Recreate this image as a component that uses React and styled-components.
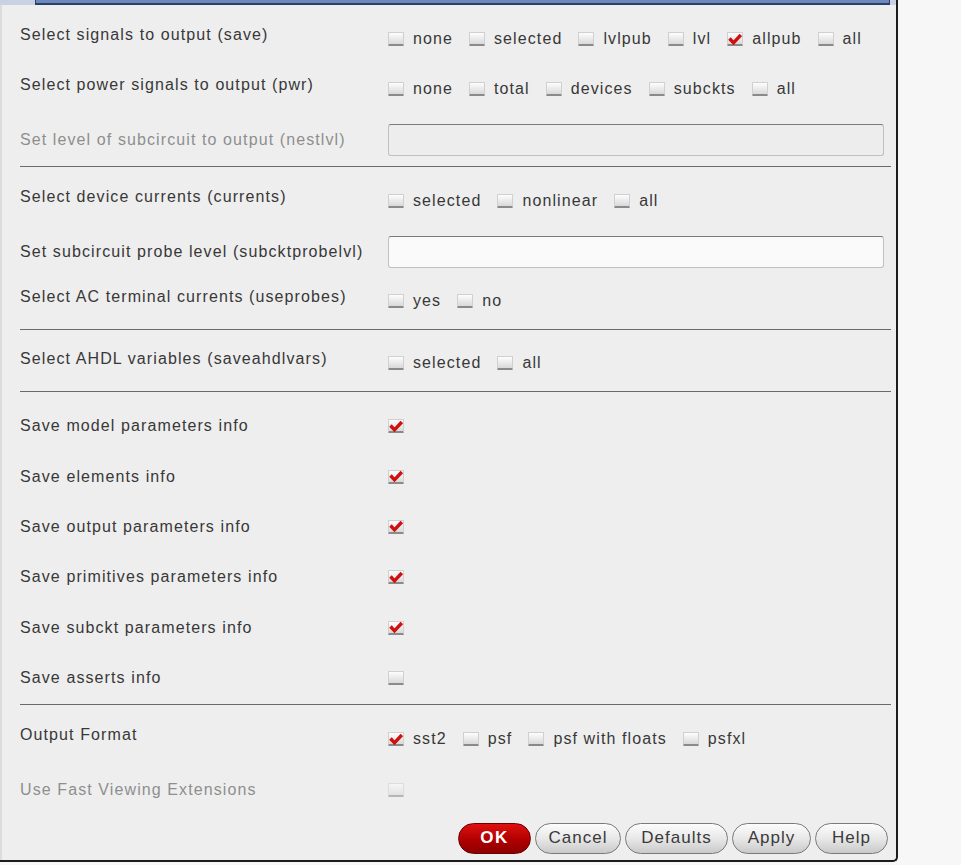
import React from 'react';
import styled, { createGlobalStyle } from 'styled-components';

const Global = createGlobalStyle`
  body {
    margin: 0;
    background: #f7f7f7;
    font-family: "Liberation Sans", Arial, sans-serif;
  }
`;

const Panel = styled.div`
  width: 896px;
  height: 860px;
  background: #eeeeee;
  border-right: 2px solid #1c1c1c;
  border-bottom: 2px solid #1c1c1c;
  border-bottom-right-radius: 5px;
  box-shadow: inset 2px 0 0 #dcdcdc;
  display: flex;
  flex-direction: column;
`;

const TopStrip = styled.div`
  height: 5px;
  display: flex;
  background: #c9d2e3;
`;

const TopBar = styled.div`
  margin-left: 35px;
  width: 855px;
  background: #6d88bd;
  border-left: 1px solid #2c3f6b;
  border-right: 1px solid #2c3f6b;
  border-bottom: 2px solid #2c3f6b;
  box-sizing: border-box;
`;

const Body = styled.div`
  padding: 9px 5px 0 20px;
  display: flex;
  flex-direction: column;
`;

const Row = styled.div`
  height: ${p => p.h}px;
  padding-top: ${p => p.pt || 0}px;
  box-sizing: border-box;
  display: grid;
  grid-template-columns: 368px 1fr;
  align-items: center;
`;

const Label = styled.div`
  font-size: 16px;
  letter-spacing: 1.1px;
  color: ${p => (p.disabled ? '#8e8e8e' : '#383838')};
  margin-bottom: ${p => (p.raise ? 9 : 0)}px;
  white-space: nowrap;
`;

const Options = styled.div`
  display: flex;
  align-items: center;
  gap: 16px;
`;

const Option = styled.label`
  display: flex;
  align-items: center;
  gap: 9px;
  font-size: 16px;
  letter-spacing: 1.1px;
  color: #383838;
`;

const Box = styled.span`
  width: 16px;
  height: 14px;
  box-sizing: border-box;
  background: linear-gradient(#fdfdfd, #d9d9d9);
  border: 1px solid #d0d0d0;
  border-bottom: 2px solid #8a8a8a;
  border-radius: 1px;
  display: inline-flex;
  align-items: center;
  justify-content: center;
  opacity: ${p => (p.disabled ? 0.55 : 1)};
`;

const Input = styled.div`
  height: 32px;
  width: 496px;
  box-sizing: border-box;
  border: 1px solid #c0c0c0;
  border-top-color: #7a7a7a;
  border-radius: 3px;
  background: ${p => (p.disabled ? '#ededed' : '#fafafa')};
`;

const Sep = styled.div`
  height: 1px;
  background: #6a6a6a;
  width: 871px;
`;

const Buttons = styled.div`
  display: flex;
  justify-content: flex-end;
  gap: 4px;
  padding: 8px 8px 0 0;
`;

const Btn = styled.button`
  height: 31px;
  width: ${p => p.w}px;
  border-radius: 16px;
  border: 1px solid ${p => (p.primary ? '#6a0000' : '#7a7a7a')};
  background: ${p =>
    p.primary
      ? 'linear-gradient(#e01010, #b00000 55%, #8c0000)'
      : 'linear-gradient(#fcfcfc, #e8e8e8 50%, #c9c9c9)'};
  color: ${p => (p.primary ? '#fff' : '#3a3a3a')};
  font-family: "Liberation Sans", Arial, sans-serif;
  font-size: 17px;
  font-weight: ${p => (p.primary ? 700 : 400)};
  letter-spacing: ${p => (p.primary ? 1.5 : 1)}px;
  padding: 0;
`;

const Check = () => (
  <svg width="14" height="12" viewBox="0 0 14 12">
    <path d="M1.5 5.5 L5.5 9.8 L12.8 2" stroke="#d01010" strokeWidth="3.4" fill="none" />
  </svg>
);

const CB = ({ checked, disabled }) => (
  <Box disabled={disabled}>{checked && <Check />}</Box>
);

const Opts = ({ items }) => (
  <Options>
    {items.map(([t, c]) => (
      <Option key={t}>
        <CB checked={c} />
        {t}
      </Option>
    ))}
  </Options>
);

const saveRows = [
  ['Save model parameters info', true],
  ['Save elements info', true],
  ['Save output parameters info', true],
  ['Save primitives parameters info', true],
  ['Save subckt parameters info', true],
  ['Save asserts info', false],
];

export default function App() {
  return (
    <>
      <Global />
      <Panel>
        <TopStrip>
          <TopBar />
        </TopStrip>
        <Body>
          <Row h={50}>
            <Label raise>Select signals to output (save)</Label>
            <Opts items={[['none'], ['selected'], ['lvlpub'], ['lvl'], ['allpub', true], ['all']]} />
          </Row>
          <Row h={50}>
            <Label raise>Select power signals to output (pwr)</Label>
            <Opts items={[['none'], ['total'], ['devices'], ['subckts'], ['all']]} />
          </Row>
          <Row h={52}>
            <Label disabled>Set level of subcircuit to output (nestlvl)</Label>
            <Input disabled />
          </Row>
          <Sep />
          <Row h={68}>
            <Label raise>Select device currents (currents)</Label>
            <Opts items={[['selected'], ['nonlinear'], ['all']]} />
          </Row>
          <Row h={34}>
            <Label>Set subcircuit probe level (subcktprobelvl)</Label>
            <Input />
          </Row>
          <Row h={60} pt={4}>
            <Label raise>Select AC terminal currents (useprobes)</Label>
            <Opts items={[['yes'], ['no']]} />
          </Row>
          <Sep />
          <Row h={61} pt={5}>
            <Label raise>Select AHDL variables (saveahdlvars)</Label>
            <Opts items={[['selected'], ['all']]} />
          </Row>
          <Sep />
          <Row h={9} />
          {saveRows.map(([t, c]) => (
            <Row h={50.4} key={t}>
              <Label>{t}</Label>
              <Options>
                <CB checked={c} />
              </Options>
            </Row>
          ))}
          <Row h={0.6} />
          <Sep />
          <Row h={60} pt={9}>
            <Label raise>Output Format</Label>
            <Opts items={[['sst2', true], ['psf'], ['psf with floats'], ['psfxl']]} />
          </Row>
          <Row h={50}>
            <Label disabled>Use Fast Viewing Extensions</Label>
            <Options>
              <CB disabled />
            </Options>
          </Row>
        </Body>
        <Buttons>
          <Btn primary w={73}>OK</Btn>
          <Btn w={86}>Cancel</Btn>
          <Btn w={103}>Defaults</Btn>
          <Btn w={79}>Apply</Btn>
          <Btn w={73}>Help</Btn>
        </Buttons>
      </Panel>
    </>
  );
}
